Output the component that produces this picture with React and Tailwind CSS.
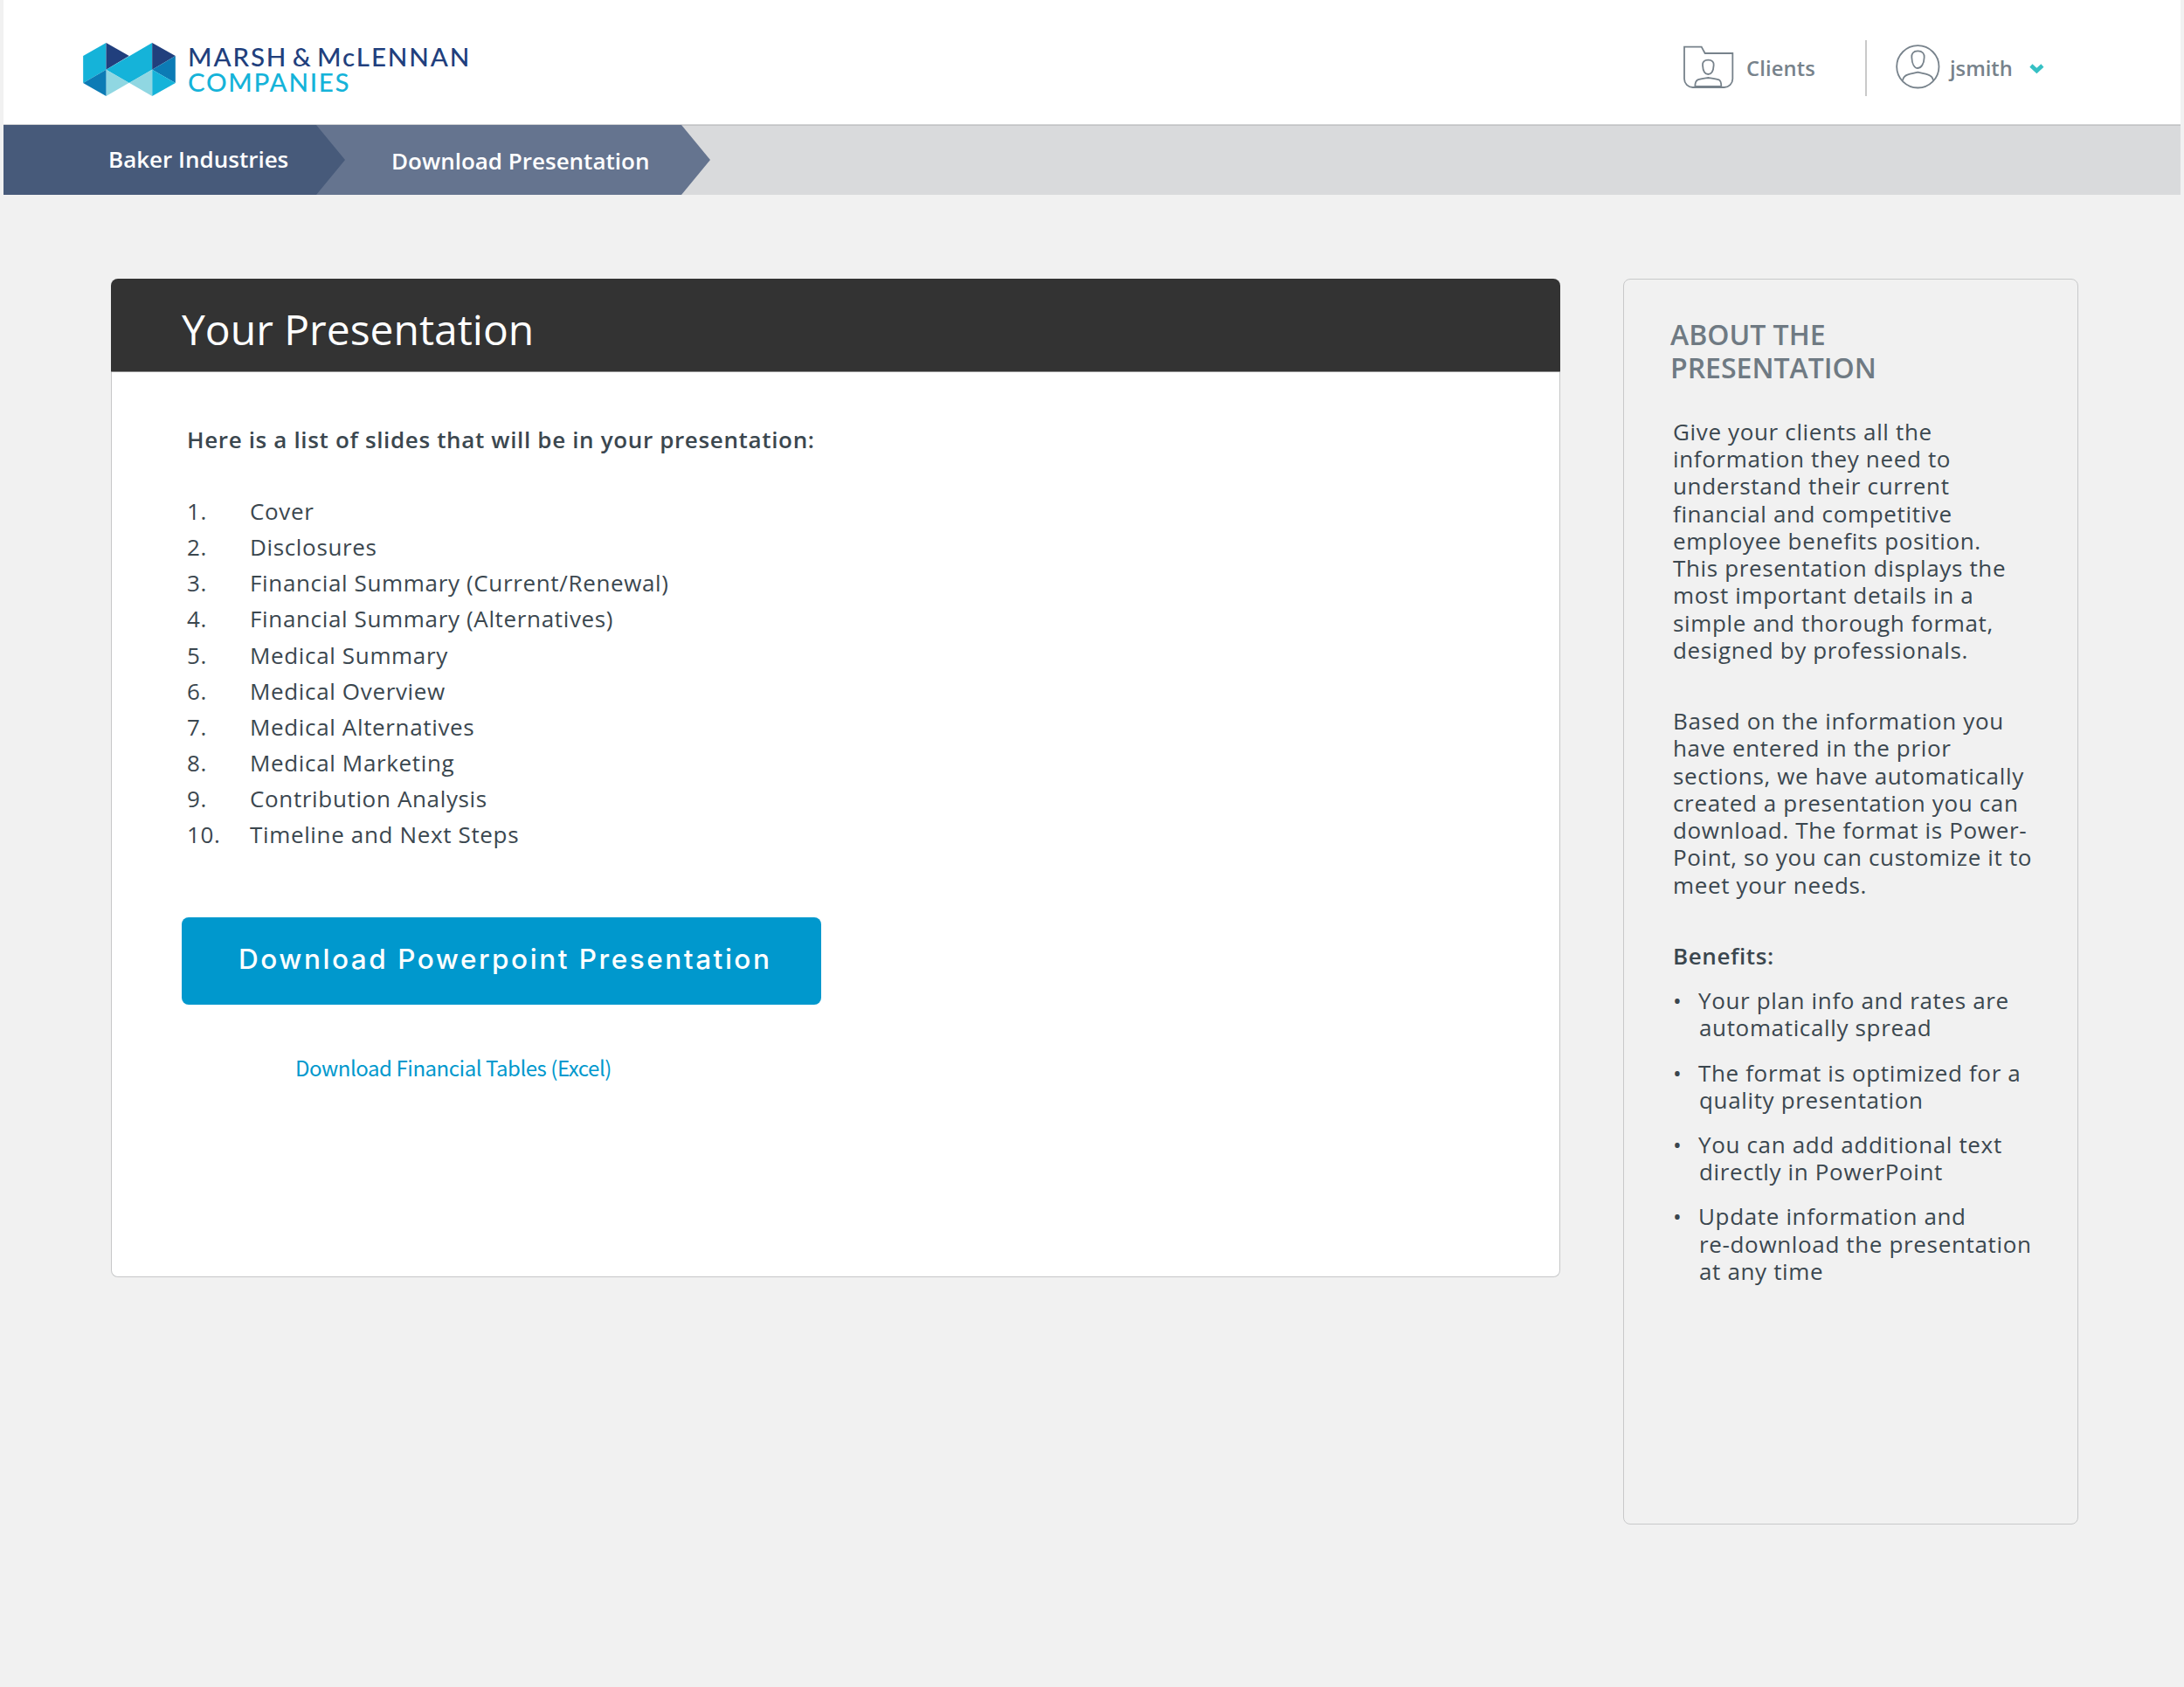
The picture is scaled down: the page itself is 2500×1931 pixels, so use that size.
const slides = [
  "Cover",
  "Disclosures",
  "Financial Summary (Current/Renewal)",
  "Financial Summary (Alternatives)",
  "Medical Summary",
  "Medical Overview",
  "Medical Alternatives",
  "Medical Marketing",
  "Contribution Analysis",
  "Timeline and Next Steps",
];

const about = [
  "Give your clients all the",
  "information they need to",
  "understand their current",
  "financial and competitive",
  "employee benefits position.",
  "This presentation displays the",
  "most important details in a",
  "simple and thorough format,",
  "designed by professionals.",
];

const format = [
  "Based on the information you",
  "have entered in the prior",
  "sections, we have automatically",
  "created a presentation you can",
  "download. The format is Power-",
  "Point, so you can customize it to",
  "meet your needs.",
];

const benefits = [
  ["Your plan info and rates are", "automatically spread"],
  ["The format is optimized for a", "quality presentation"],
  ["You can add additional text", "directly in PowerPoint"],
  ["Update information and", "re-download the presentation", "at any time"],
];

function Lines({ lines }) {
  return lines.map((line) => (
    <span key={line} className="block whitespace-nowrap">
      {line}
    </span>
  ));
}

function LogoMark() {
  return (
    <svg width="106" height="61" viewBox="45 57 317 183" className="shrink-0">
      <polygon points="45,102 124,57 124,149 45,195" fill="#15b3d9" />
      <polygon points="124,57 203,102 124,149" fill="#213f7d" />
      <polygon points="124,149 282,57 282,149 203,195" fill="#15b3d9" />
      <polygon points="282,57 362,102 282,149" fill="#213f7d" />
      <polygon points="362,102 362,195 282,149" fill="#0c7bb5" />
      <polygon points="282,149 362,195 282,240" fill="#15b3d9" />
      <polygon points="203,194 282,149 282,240" fill="#90d7e2" />
      <polygon points="124,149 203,194 124,240" fill="#90d7e2" />
      <polygon points="45,195 124,149 124,240" fill="#0c7bb5" />
    </svg>
  );
}

function FolderIcon() {
  return (
    <svg width="59" height="50" viewBox="78 66 177 150" fill="none" stroke="#77828b" strokeWidth="5.4" className="shrink-0 -mt-px">
      <path d="M84 71H143L155 93H250V181a29 29 0 0 1-29 29H113a29 29 0 0 1-29-29Z" />
      <path d="M166 116C152 116 146 123 147 134C148 152 155 165 166 165C177 165 184 152 185 134C186 123 180 116 166 116Z" />
      <path d="M121 207C121 195 122 188 130 184C140 180 152 179 166 177C180 179 192 180 203 184C210 188 211 195 211 207Z" />
    </svg>
  );
}

function UserIcon() {
  return (
    <svg width="51" height="51" viewBox="810 62 153 153" fill="none" stroke="#77828b" strokeWidth="5.4" className="shrink-0 -mt-[3px]">
      <circle cx="886" cy="138" r="72.5" />
      <path d="M886 84C870 84 864 94 865 106C866 128 874 143 886 143C898 143 907 128 908 106C909 94 902 84 886 84Z" />
      <path d="M834 185C836 172 842 168 852 165C862 162 875 160 886 157C897 160 910 162 920 165C930 168 937 172 939 185" />
    </svg>
  );
}

export default function App() {
  return (
    <div className="w-full h-[1931px] overflow-hidden bg-[#f1f1f1] px-1 font-['Open_Sans',sans-serif] text-[#3b474f]">
      <header className="flex h-[142px] items-start bg-white">
        <div className="flex pl-[91px] pt-[49px]">
          <LogoMark />
          <div className="ml-[14px] mt-[1px] whitespace-nowrap font-['Lato',sans-serif] text-[29.5px] font-medium leading-[29.3px]">
            <div className="tracking-[1.9px] [word-spacing:-4px] text-[#213f7d]">MARSH &amp; McLENNAN</div>
            <div className="tracking-[1.7px] text-[#15b3d9]">COMPANIES</div>
          </div>
        </div>
        <nav className="ml-auto mr-[156px] flex h-[155px] items-center text-[23.7px] font-semibold leading-8 text-[#77828b]">
          <FolderIcon />
          <span className="ml-[14px] w-20 tracking-[0.15px]">Clients</span>
          <span className="ml-14 h-16 w-0.5 bg-[#c9c9c9]" />
          <span className="ml-[33px] flex">
            <UserIcon />
          </span>
          <span className="ml-[11px] w-[77px]">jsmith</span>
          <svg width="18" height="15" viewBox="0 0 18 15" fill="none" stroke="#36c0c4" strokeWidth="4.6" className="ml-[13px] mt-[2px]">
            <path d="M2.9 4L9.4 10L15.9 4" />
          </svg>
        </nav>
      </header>

      <div className="h-px bg-[#d4d5d6]" />
      <nav className="flex h-20 bg-[#d9dadc] text-[26px] font-semibold text-white shadow-[inset_0_1px_0_#c2c3c5]">
        <div className="z-10 flex w-[391px] items-center bg-[#475a7a] pb-px pl-[120px] [clip-path:polygon(0_0,358px_0,100%_50%,358px_100%,0_100%)]">
          Baker Industries
        </div>
        <div className="-ml-[33px] flex w-[451px] items-center bg-[#65748f] pl-[86px] pt-[2px] [clip-path:polygon(0_0,418px_0,100%_50%,418px_100%,0_100%)]">
          Download Presentation
        </div>
      </nav>

      <main className="mt-24 flex items-start gap-[72px] pl-[123px]">
        <section className="flex h-[1143px] w-[1659px] flex-col">
          <h1 className="flex h-[107px] items-center rounded-t-lg border-b border-[#8d8d8d] bg-[#333333] pl-[81px] pt-[9px] text-[48px] text-white">
            Your Presentation
          </h1>
          <div className="grow rounded-b-lg border-x border-b border-[#c6c7c8] bg-white pl-20 pt-[59px]">
            <p className="pl-[6px] text-[26px] font-semibold leading-9 tracking-[0.65px]">
              Here is a list of slides that will be in your presentation:
            </p>
            <ol className="mt-[44px] pl-[6px] text-[26px] leading-[41.14px] tracking-[0.65px]">
              {slides.map((slide, i) => (
                <li key={slide} className="flex">
                  <span className="w-[72px]">{i + 1}.</span>
                  <span>{slide}</span>
                </li>
              ))}
            </ol>
            <button className="mt-[74px] flex h-[100px] w-[732px] items-center whitespace-nowrap rounded-lg bg-[#0098cd] pb-[5px] pl-[65px] font-['Inter',sans-serif] text-[31.5px] font-medium tracking-[2.54px] text-white">
              Download Powerpoint Presentation
            </button>
            <a className="mt-[54px] block pl-[130px] font-['Noto_Sans_CJK_SC',sans-serif] text-[24px] leading-9 tracking-[-0.46px] text-[#0098cd]">
              Download Financial Tables (Excel)
            </a>
          </div>
        </section>

        <aside className="h-[1426px] w-[521px] rounded-lg border border-[#c8c9ca] pl-[53px] pt-[44px] text-[26px] leading-[31.25px] tracking-[0.65px]">
          <h2 className="text-[32px] font-semibold leading-[38.3px] tracking-normal text-[#6f7a83]">
            <Lines lines={["ABOUT THE", "PRESENTATION"]} />
          </h2>
          <div className="pl-[3px]">
            <p className="mt-[38.4px]">
              <Lines lines={about} />
            </p>
            <p className="mt-[50px]">
              <Lines lines={format} />
            </p>
            <h3 className="mt-[50px] font-semibold tracking-[0.6px]">Benefits:</h3>
            <ul className="mt-5 flex flex-col gap-[19.9px]">
              {benefits.map(([first, ...rest]) => (
                <li key={first} className="flex">
                  <span className="w-[29px]">•</span>
                  <div>
                    <Lines lines={[first]} />
                    <div className="pl-px">
                      <Lines lines={rest} />
                    </div>
                  </div>
                </li>
              ))}
            </ul>
          </div>
        </aside>
      </main>
    </div>
  );
}
